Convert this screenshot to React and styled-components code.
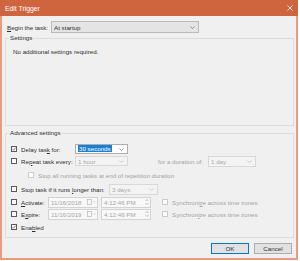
import React from 'react';
import styled, { createGlobalStyle } from 'styled-components';

const Global = createGlobalStyle`
  body {
    margin: 0;
    background: #ffffff;
    font-family: "Liberation Sans", Arial, sans-serif;
  }
`;

const Window = styled.div`
  width: 298px;
  height: 260px;
  display: flex;
  flex-direction: column;
  font-size: 6.2px;
  color: #2e2e2e;
`;

const TitleBar = styled.div`
  height: 16px;
  flex: none;
  background: #cf653f;
  color: #fff;
  display: flex;
  align-items: center;
  justify-content: space-between;
  padding: 0 5px;
  box-sizing: border-box;
  font-size: 6.8px;
`;

const Body = styled.div`
  flex: 1;
  background: #f0f0f0;
  border: 2px solid #e59c7f;
  border-top: 0;
  display: flex;
  flex-direction: column;
`;

const Row = styled.div`
  display: flex;
  align-items: center;
  height: ${p => p.$h || 12}px;
  margin-top: ${p => p.$top || 0}px;
  margin-left: ${p => p.$left || 0}px;
`;

const Label = styled.span`
  width: ${p => p.$w ? p.$w + 'px' : 'auto'};
  flex: none;
  white-space: nowrap;
  color: ${p => p.$off ? '#a3a3a3' : '#2e2e2e'};
  margin-left: ${p => p.$ml || 0}px;
`;

const Select = styled.div`
  width: ${p => p.$w}px;
  height: ${p => p.$h || 10}px;
  box-sizing: border-box;
  flex: none;
  margin-left: ${p => p.$ml || 0}px;
  border: 1px solid ${p => p.$off ? '#d8d8d8' : p.$ro ? '#bababa' : '#acacac'};
  background: ${p => p.$off ? '#f3f3f3' : p.$ro ? '#e4e4e4' : '#ffffff'};
  color: ${p => p.$off ? '#a8a8a8' : '#2e2e2e'};
  display: flex;
  align-items: center;
  padding: 0 3px 0 2px;
  gap: 2px;
`;

const Value = styled.span`
  flex: 1;
  white-space: nowrap;
  overflow: hidden;
`;

const Selected = styled.span`
  background: #1a7fd4;
  color: #fff;
  padding: 0 1px;
  line-height: 8px;
`;

const Group = styled.fieldset`
  margin: ${p => p.$top}px 2px 0 3px;
  padding: 0 5px;
  border: 1px solid #dcdcdc;
  height: ${p => p.$h}px;
  box-sizing: border-box;
  min-width: 0;
`;

const Legend = styled.legend`
  padding: 0 1px;
  margin-left: -2px;
  line-height: 8px;
`;

const Note = styled.div`
  margin: 6px 0 0 2px;
  line-height: 8px;
`;

const Box = styled.span`
  width: 6px;
  height: 6px;
  flex: none;
  box-sizing: border-box;
  border: 1px solid ${p => p.$off ? '#cbcbcb' : '#5a5a5a'};
  background: #fff;
  display: flex;
  align-items: center;
  justify-content: center;
  margin-right: 4px;
`;

const CheckLabel = styled.div`
  width: ${p => p.$w ? p.$w + 'px' : 'auto'};
  flex: none;
  display: flex;
  align-items: center;
  margin-left: ${p => p.$ml || 0}px;
`;

const Field = styled.div`
  width: ${p => p.$w}px;
  height: 11px;
  box-sizing: border-box;
  flex: none;
  margin-left: ${p => p.$ml || 0}px;
  border: 1px solid #d3d3d3;
  background: #f8f8f8;
  color: #a6a6a6;
  display: flex;
  align-items: center;
  padding: 0 1px 0 2px;
  gap: 2px;
`;

const Buttons = styled.div`
  display: flex;
  justify-content: flex-end;
  gap: 5px;
  margin-top: 5px;
  padding-right: 4px;
`;

const Button = styled.div`
  width: 38px;
  height: 11px;
  box-sizing: border-box;
  border: 1px solid ${p => p.$primary ? '#0078d7' : '#adadad'};
  background: #e1e1e1;
  display: flex;
  align-items: center;
  justify-content: center;
`;

const Chevron = ({ off }) => (
  <svg width="5" height="3" viewBox="0 0 5 3">
    <polyline points="0.5,0.5 2.5,2.5 4.5,0.5" fill="none" stroke={off ? '#bdbdbd' : '#707070'} strokeWidth="0.7" />
  </svg>
);

const Check = ({ on, off, label, w, ml }) => (
  <CheckLabel $w={w} $ml={ml}>
    <Box $off={off}>
      {on && (
        <svg width="4" height="4" viewBox="0 0 4 4">
          <polyline points="0.3,2 1.5,3.2 3.7,0.6" fill="none" stroke="#444" strokeWidth="0.7" />
        </svg>
      )}
    </Box>
    <Label $off={off}>{label}</Label>
  </CheckLabel>
);

const DateField = ({ value, w, ml }) => (
  <Field $w={w} $ml={ml}>
    <Value>{value}</Value>
    <svg width="9" height="6" viewBox="0 0 9 6">
      <rect x="0.5" y="0.5" width="4" height="5" fill="none" stroke="#b8b8b8" strokeWidth="0.7" />
      <polyline points="6.5,2.5 7.5,3.5 8.5,2.5" fill="none" stroke="#b8b8b8" strokeWidth="0.7" />
    </svg>
  </Field>
);

const TimeField = ({ value, w, ml }) => (
  <Field $w={w} $ml={ml}>
    <Value>{value}</Value>
    <svg width="4" height="8" viewBox="0 0 4 8">
      <polyline points="0.5,3 2,1.5 3.5,3" fill="none" stroke="#a3a3a3" strokeWidth="0.7" />
      <polyline points="0.5,5 2,6.5 3.5,5" fill="none" stroke="#a3a3a3" strokeWidth="0.7" />
    </svg>
  </Field>
);

export default function App() {
  return (
    <>
      <Global />
      <Window>
        <TitleBar>
          <span>Edit Trigger</span>
          <svg width="6" height="6" viewBox="0 0 6 6">
            <path d="M0.5 0.5 L5.5 5.5 M5.5 0.5 L0.5 5.5" stroke="#fff" strokeWidth="0.8" />
          </svg>
        </TitleBar>
        <Body>
          <Row $top={5} $left={5}>
            <Label $w={44}><u>B</u>egin the task:</Label>
            <Select $w={148} $h={12} $ro>
              <Value>At startup</Value>
              <Chevron />
            </Select>
          </Row>

          <Group $top={1} $h={92}>
            <Legend>Settings</Legend>
            <Note>No additional settings required.</Note>
          </Group>

          <Group $top={3} $h={109}>
            <Legend>Advanced settings</Legend>
            <Row $top={6}>
              <Check on w={64} label={<>Delay tas<u>k</u> for:</>} />
              <Select $w={53}>
                <Value><Selected>30 seconds</Selected></Value>
                <Chevron />
              </Select>
            </Row>
            <Row>
              <Check w={64} label={<>Re<u>p</u>eat task every:</>} />
              <Select $w={53} $off>
                <Value>1 hour</Value>
                <Chevron off />
              </Select>
              <Label $off $w={50} $ml={30}>for a duration of:</Label>
              <Select $w={48} $h={11} $off>
                <Value>1 day</Value>
                <Chevron off />
              </Select>
            </Row>
            <Row $top={2}>
              <Check off ml={17} label="Stop all running tasks at end of repetition duration" />
            </Row>
            <Row $top={2}>
              <Check w={98} label={<>Stop task if it runs <u>l</u>onger than:</>} />
              <Select $w={49} $h={11} $off>
                <Value>3 days</Value>
                <Chevron off />
              </Select>
            </Row>
            <Row $top={1}>
              <Check w={37} label={<><u>A</u>ctivate:</>} />
              <DateField w={50} value="11/16/2018" />
              <TimeField w={50} ml={3} value="4:12:46 PM" />
              <Check off ml={11} label={<>Synchroni<u>z</u>e across time zones</>} />
            </Row>
            <Row>
              <Check w={37} label={<>E<u>x</u>pire:</>} />
              <DateField w={50} value="11/16/2019" />
              <TimeField w={50} ml={3} value="4:12:46 PM" />
              <Check off ml={11} label={<>Synchron<u>i</u>ze across time zones</>} />
            </Row>
            <Row $top={1}>
              <Check on label={<>Ena<u>b</u>led</>} />
            </Row>
          </Group>

          <Buttons>
            <Button $primary>OK</Button>
            <Button>Cancel</Button>
          </Buttons>
        </Body>
      </Window>
    </>
  );
}
